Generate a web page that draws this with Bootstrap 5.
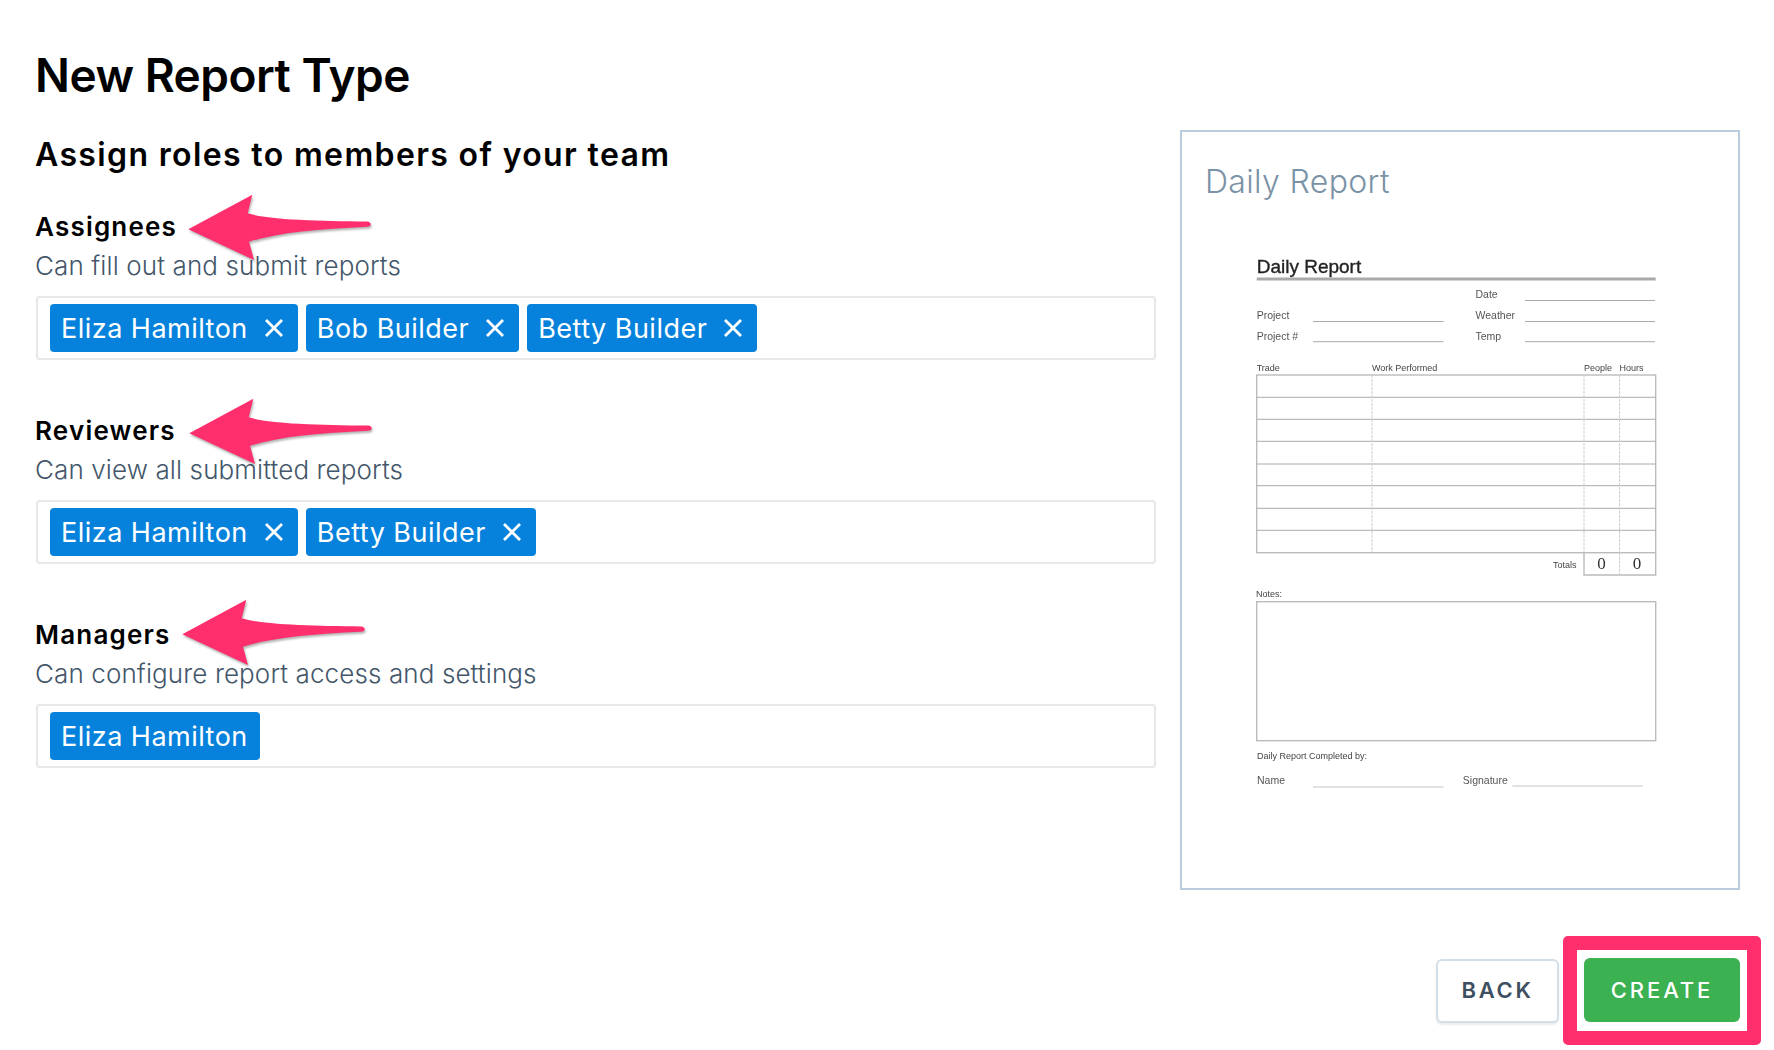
<!doctype html>
<html lang="en">
<head>
<meta charset="utf-8">
<title>New Report Type</title>
<link href="https://cdn.jsdelivr.net/npm/bootstrap@5.3.0/dist/css/bootstrap.min.css" rel="stylesheet">
<style>
body { font-family: Inter, "Liberation Sans", sans-serif; background: #fff; color: #000; }
.page-title { font-size: 46px; line-height: 56px; font-weight: 600; margin: 0; padding: 47px 0 0 35px; letter-spacing: -.5px; color: #000; }
.main-area { padding: 27px 33px 0 35px; gap: 24px; }
.left-col { width: 1121px; padding-top: 5px; }
.sub-title { font-size: 32px; line-height: 40px; font-weight: 600; margin: 0 0 36px; letter-spacing: 1.36px; color: #000; }
.role-block { margin-bottom: 55px; }
.role-name { font-size: 26px; line-height: 32px; font-weight: 600; margin: 0 0 7px; letter-spacing: 1.2px; color: #000; }
.role-desc { font-size: 26px; line-height: 32px; font-weight: 300; margin: 0 0 14px; letter-spacing: .11px; color: #43566a; }
.tag-box { height: 64px; border: 2px solid #e8e8e8; border-radius: 4px; padding: 6px 12px; margin-left: 1px; background: #fff; }
.tag-chip { height: 48px; background: #0682dc; color: #fff; font-size: 27px; line-height: 46px; padding: 2px 12px 0 11px; border-radius: 4px; letter-spacing: .48px; white-space: nowrap; }
.tag-chip:has(.tag-x) { gap: 16px; padding-right: 14px; }
.tag-x { width: 20px; height: 20px; margin-top: -2px; stroke: #fff; stroke-width: 2.8; fill: none; }
.pointer { position: absolute; left: 145px; top: -21px; width: 200px; height: 76px; overflow: visible; filter: drop-shadow(1px 2px 1px rgba(0,0,0,.3)); }
.pointer-b { left: 146px; top: -21px; }
.pointer-c { left: 139px; top: -24px; }
.preview { width: 560px; height: 760px; border: 2px solid #b9cbdc; background: #fff; flex: none; }
.preview-title { font-size: 32px; line-height: 40px; font-weight: 300; color: #7a92a6; padding: 30px 0 0 23px; margin: 0; letter-spacing: .35px; }
.doc { display: block; width: 556px; height: 600px; margin-top: -2px; filter: blur(.5px); }
.doc text { font-family: "Liberation Sans", Arial, sans-serif; fill: #555; font-size: 10.5px; }
.doc .dt { font-size: 19px; font-weight: 400; fill: #222; stroke: #222; stroke-width: .35px; }
.doc .sm { font-size: 9px; fill: #444; }
.doc .zr { font-family: "Liberation Serif", serif; font-size: 17px; fill: #333; text-anchor: middle; }
.doc .ln { stroke: #aaa; stroke-width: 1; fill: none; }
.doc .lt { stroke: #d8d8d8; stroke-width: 1.5; fill: none; }
.doc .bx { stroke: #bbb; stroke-width: 1.4; fill: none; }
.doc .ds { stroke: #ccc; stroke-width: 1; stroke-dasharray: 3 1; fill: none; }
.foot { padding: 46px 13px 0 0; gap: 4px; }
.act-btn { height: 64px; font-size: 22px; font-weight: 600; letter-spacing: 2.7px; border-radius: 6px; padding: 0; }
.act-back { width: 123px; color: #3d4f60; background: #fff; border: 2px solid #d3dfe9; box-shadow: 0 2px 2px rgba(0,0,0,.08); }
.act-create { width: 156px; color: #fff; background: #3bb151; border: 0; font-weight: 500; letter-spacing: 2.9px; }
.callout { border: 14px solid #ff2e6c; border-radius: 5px; padding: 8px 7px 9px; background: #fff; }
</style>
</head>
<body>
<h1 class="page-title">New Report Type</h1>
<div class="main-area d-flex align-items-start">
  <div class="left-col">
    <h2 class="sub-title">Assign roles to members of your team</h2>

    <section class="role-block position-relative">
      <h3 class="role-name">Assignees</h3>
      <p class="role-desc">Can fill out and submit reports</p>
      <div class="tag-box d-flex gap-2">
        <span class="tag-chip d-inline-flex align-items-center">Eliza Hamilton <svg class="tag-x" viewBox="0 0 20 20"><path d="M2 2 18 18M18 2 2 18"/></svg></span>
        <span class="tag-chip d-inline-flex align-items-center">Bob Builder <svg class="tag-x" viewBox="0 0 20 20"><path d="M2 2 18 18M18 2 2 18"/></svg></span>
        <span class="tag-chip d-inline-flex align-items-center">Betty Builder <svg class="tag-x" viewBox="0 0 20 20"><path d="M2 2 18 18M18 2 2 18"/></svg></span>
      </div>
      <svg class="pointer" viewBox="0 0 200 76"><path fill="#ff2e6c" d="M8.3 39.3 72.3 4.7 67.7 23.3C90 30 140 31 187 31.5Q191 32 190.7 34.5 190.5 36.5 187 36.7C140 39 100 42 69 51.7L74 70Z"/></svg>
    </section>

    <section class="role-block position-relative">
      <h3 class="role-name">Reviewers</h3>
      <p class="role-desc">Can view all submitted reports</p>
      <div class="tag-box d-flex gap-2">
        <span class="tag-chip d-inline-flex align-items-center">Eliza Hamilton <svg class="tag-x" viewBox="0 0 20 20"><path d="M2 2 18 18M18 2 2 18"/></svg></span>
        <span class="tag-chip d-inline-flex align-items-center">Betty Builder <svg class="tag-x" viewBox="0 0 20 20"><path d="M2 2 18 18M18 2 2 18"/></svg></span>
      </div>
      <svg class="pointer pointer-b" viewBox="0 0 200 76"><path fill="#ff2e6c" d="M8.3 39.3 72.3 4.7 67.7 23.3C90 30 140 31 187 31.5Q191 32 190.7 34.5 190.5 36.5 187 36.7C140 39 100 42 69 51.7L74 70Z"/></svg>
    </section>

    <section class="role-block position-relative">
      <h3 class="role-name">Managers</h3>
      <p class="role-desc">Can configure report access and settings</p>
      <div class="tag-box d-flex gap-2">
        <span class="tag-chip d-inline-flex align-items-center">Eliza Hamilton</span>
      </div>
      <svg class="pointer pointer-c" viewBox="0 0 200 76"><path fill="#ff2e6c" d="M8.3 39.3 72.3 4.7 67.7 23.3C90 30 140 31 187 31.5Q191 32 190.7 34.5 190.5 36.5 187 36.7C140 39 100 42 69 51.7L74 70Z"/></svg>
    </section>
  </div>

  <div class="preview">
    <h4 class="preview-title">Daily Report</h4>
    <svg class="doc" viewBox="1182 200 556 600">
      <text class="dt" x="1256.7" y="272.7">Daily Report</text>
      <path d="M1256.7 279H1655.7" stroke="#aaa" stroke-width="3" fill="none"/>

      <text x="1475.5" y="298">Date</text><path class="ln" d="M1525 300.5H1655"/>
      <text x="1256.7" y="318.7">Project</text><path class="ln" d="M1313 321.5H1443.5"/>
      <text x="1475.5" y="318.7">Weather</text><path class="ln" d="M1525 321.5H1655"/>
      <text x="1256.7" y="340">Project #</text><path class="ln" d="M1313 341.7H1443.5"/>
      <text x="1475.5" y="340">Temp</text><path class="ln" d="M1525 341.7H1655"/>

      <text class="sm" x="1256.7" y="370.7">Trade</text>
      <text class="sm" x="1372" y="370.7">Work Performed</text>
      <text class="sm" x="1584" y="370.7">People</text>
      <text class="sm" x="1619.5" y="370.7">Hours</text>

      <rect class="bx" x="1256.7" y="375" width="399" height="177.7"/>
      <path class="ln" d="M1256.7 397.3H1655.7M1256.7 419.3H1655.7M1256.7 441.3H1655.7M1256.7 464H1655.7M1256.7 485.7H1655.7M1256.7 508.3H1655.7M1256.7 530.3H1655.7"/>
      <path class="ds" d="M1372 375V552.7M1584 375V552.7M1619.5 375V552.7"/>

      <text class="sm" x="1553" y="567.7">Totals</text>
      <path class="bx" d="M1584 552.7V575H1655.7V552.7"/>
      <path class="ds" d="M1619.5 552.7V575"/>
      <text class="zr" x="1601.6" y="569.3">0</text>
      <text class="zr" x="1637" y="569.3">0</text>

      <text class="sm" x="1256" y="597">Notes:</text>
      <rect class="bx" x="1256.7" y="601.7" width="399" height="139"/>

      <text class="sm" x="1257" y="759">Daily Report Completed by:</text>
      <text x="1257" y="784.3">Name</text><path class="lt" d="M1313 787H1443.5"/>
      <text x="1462.8" y="784.3">Signature</text><path class="lt" d="M1512.4 786H1643"/>
    </svg>
  </div>
</div>

<div class="foot d-flex justify-content-end align-items-center">
  <button type="button" class="btn act-btn act-back">BACK</button>
  <div class="callout d-flex">
    <button type="button" class="btn act-btn act-create">CREATE</button>
  </div>
</div>
<script src="https://cdn.jsdelivr.net/npm/bootstrap@5.3.0/dist/js/bootstrap.bundle.min.js"></script>
</body>
</html>
